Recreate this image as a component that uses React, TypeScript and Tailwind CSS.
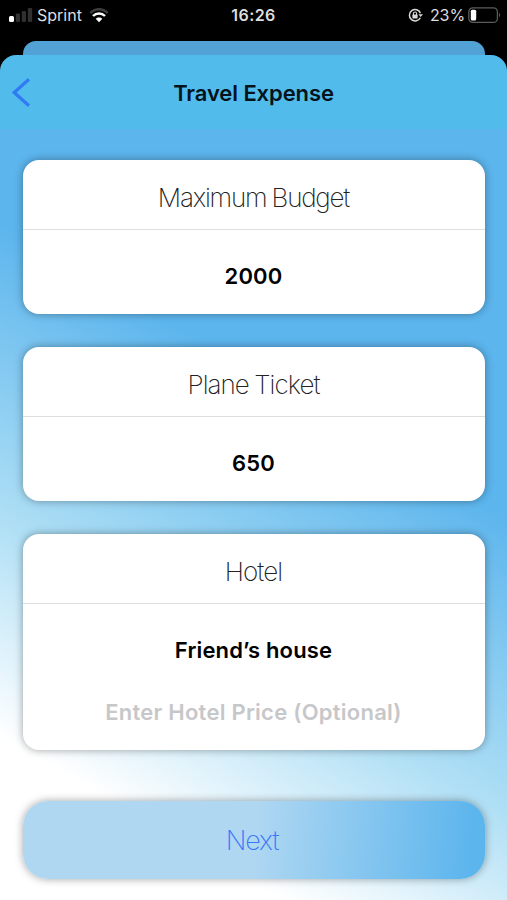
import type { ReactNode } from "react";

function StatusBar() {
  return (
    <header className="grid h-[30px] grid-cols-[1fr_auto_1fr] items-center bg-black text-[16px] font-medium text-[#dedede]">
      <div className="flex items-center pl-[9px]">
        <svg width="24" height="16" viewBox="0 0 24 16" aria-hidden="true">
          <rect x="0" y="9" width="5" height="6" rx="1.5" fill="#fff" />
          <rect x="6.8" y="6.5" width="4.2" height="8.5" rx="1.2" fill="#303030" />
          <rect x="12.8" y="4" width="4.2" height="11" rx="1.2" fill="#303030" />
          <rect x="18.8" y="1" width="4.4" height="14" rx="1.2" fill="#303030" />
        </svg>
        <span className="ml-[4px] font-normal">Sprint</span>
        <svg className="ml-[7px]" width="20" height="15" viewBox="0 0 20 15" fill="none" aria-hidden="true">
          <path d="M1.3 5.1C6.2-.1 13.8-.1 18.7 5.1" stroke="#3c3c3c" strokeWidth="2.5" />
          <path d="M4 8C7.4 4.5 12.6 4.5 16 8" stroke="#fff" strokeWidth="2.5" />
          <path d="M6.7 10.8C8.6 8.9 11.4 8.9 13.3 10.8L10 14.2Z" fill="#fff" />
        </svg>
      </div>
      <span className="text-[16px] font-semibold tracking-[0.4px]">16:26</span>
      <div className="flex items-center justify-end pr-[6px]">
        <svg width="15" height="15" viewBox="0 0 15 15" fill="none" aria-hidden="true">
          <path d="M12.3 9.7A5.7 5.7 0 1 1 12.4 5.1" stroke="#d8d8d8" strokeWidth="1.5" />
          <path d="M10.4 6.2H15L12.7 9Z" fill="#d8d8d8" />
          <rect x="4.4" y="6.5" width="5.2" height="4" rx=".7" fill="#d8d8d8" />
          <path d="M5.4 7V5.6a1.6 1.6 0 0 1 3.2 0V7" stroke="#d8d8d8" strokeWidth="1.1" />
        </svg>
        <span className="ml-[7px] font-normal tracking-[-0.1px]">23%</span>
        <svg className="ml-[3px]" width="33" height="17" viewBox="0 0 33 17" fill="none" aria-hidden="true">
          <rect x=".8" y=".8" width="28.6" height="14.6" rx="4" stroke="#5c5c5c" strokeWidth="1.3" />
          <rect x="2.8" y="2.8" width="5.4" height="10.6" rx="1.5" fill="#fff" />
          <path d="M31 6c1.5.6 1.5 3.6 0 4.2Z" fill="#5c5c5c" />
        </svg>
      </div>
    </header>
  );
}

function Card({ title, spacing, children }: { title: string; spacing: string; children: ReactNode }) {
  return (
    <section className="rounded-[16px] bg-white shadow-[0_0_8px_rgba(0,0,0,0.36)]">
      <h2
        className={`flex h-[70px] items-center justify-center border-b border-[#dcdede] pt-[5px] text-[26px] font-extralight text-[#222] ${spacing}`}
      >
        {title}
      </h2>
      {children}
    </section>
  );
}

function Value({ children }: { children: ReactNode }) {
  return (
    <p className="flex h-[84px] items-center justify-center pt-[9px] text-[22px] font-semibold tracking-[0.15px] text-black">
      {children}
    </p>
  );
}

export default function App() {
  return (
    <main className="flex h-[900px] w-[507px] flex-col overflow-hidden bg-black font-['Inter','Liberation_Sans',sans-serif]">
      <StatusBar />
      <div className="mx-[22.5px] mt-[11px] h-[14px] shrink-0 rounded-t-[13px] bg-[#52a2d5]" />
      <div className="flex flex-1 flex-col overflow-hidden rounded-t-[16px] bg-[#51bcec]">
        <nav className="grid h-[74px] shrink-0 grid-cols-[1fr_auto_1fr] items-center">
          <button aria-label="Back" className="ml-[12px] mt-px w-[18px]">
            <svg width="18" height="29" viewBox="0 0 18 29" fill="none" aria-hidden="true">
              <path d="M17 1.3L2.2 14.5L17 27.7" stroke="#2f7af5" strokeWidth="3.2" />
            </svg>
          </button>
          <h1 className="pt-[3px] text-[22px] font-semibold tracking-[-0.1px] text-[#06131a]">Travel Expense</h1>
        </nav>
        <div className="flex flex-1 flex-col bg-[linear-gradient(210deg,#5cb5ed_0px,#5cb5ed_335px,#afdff5_592px,#ffffff_780px)] px-[22.5px] pt-[31px]">
          <Card title="Maximum Budget" spacing="tracking-[-1.2px] [word-spacing:-1px]">
            <Value>2000</Value>
          </Card>
          <div className="h-[33px]" />
          <Card title="Plane Ticket" spacing="tracking-[-0.95px] [word-spacing:-1px]">
            <Value>650</Value>
          </Card>
          <div className="h-[33px]" />
          <Card title="Hotel" spacing="tracking-[-0.9px]">
            <Value>Friend’s house</Value>
            <p className="h-[62px] pt-[8px] text-center text-[22px] font-semibold tracking-[0.25px] text-[#c7c7c9]">
              Enter Hotel Price (Optional)
            </p>
          </Card>
          <button className="mt-[51px] h-[78px] rounded-[25px] bg-[linear-gradient(95deg,#afd7f2_0%,#afd7f2_50%,#5cb5ed_97%)] pt-[2px] pr-[3px] text-[27px] font-extralight tracking-[-1.1px] text-[#3a76f6] shadow-[0_0_8px_rgba(0,0,0,0.36)]">
            Next
          </button>
        </div>
      </div>
    </main>
  );
}
